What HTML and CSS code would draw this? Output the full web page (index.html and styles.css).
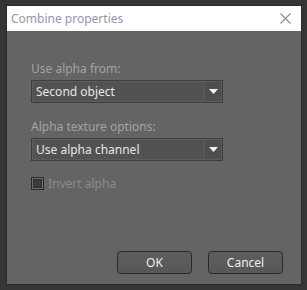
FILE: index.html
```html
<!DOCTYPE html>
<html lang="en">
<head>
  <meta charset="UTF-8" />
  <title>Combine properties</title>
  <link rel="stylesheet" href="styles.css">
</head>
<body>
  <div class="dialog">
    <div class="titlebar">
      <span class="title">Combine properties</span>
      <svg class="close" width="11" height="11" viewBox="0 0 11 11">
        <path d="M0.5 0.5 L10.5 10.5 M10.5 0.5 L0.5 10.5" stroke="#8a8a8a" stroke-width="1.1" fill="none"/>
      </svg>
    </div>
    <div class="content">
      <div class="field">
        <div class="label">Use alpha from:</div>
        <div class="select">
          <span class="value">Second object</span>
          <span class="arrow"><svg width="9" height="5" viewBox="0 0 9 5"><path d="M0 0 H9 L4.5 5 Z" fill="#f0f0f0"/></svg></span>
        </div>
      </div>
      <div class="field">
        <div class="label">Alpha texture options:</div>
        <div class="select">
          <span class="value">Use alpha channel</span>
          <span class="arrow"><svg width="9" height="5" viewBox="0 0 9 5"><path d="M0 0 H9 L4.5 5 Z" fill="#f0f0f0"/></svg></span>
        </div>
      </div>
      <label class="check">
        <span class="box"></span>
        <span>Invert alpha</span>
      </label>
      <div class="buttons">
        <button class="btn">OK</button>
        <button class="btn">Cancel</button>
      </div>
    </div>
  </div>
</body>
</html>
```

FILE: styles.css
```css
body {
  margin: 0;
  background-color: #353535;
  font-family: 'Segoe UI', 'Noto Sans', sans-serif;
  font-size: 12px;
}
.dialog {
  margin: 5px 0 0 6px;
  width: 294px;
  height: 278px;
  border: 1px solid #2b2b2b;
  background: #646464;
  display: flex;
  flex-direction: column;
}
.titlebar {
  height: 25px;
  background: #ffffff;
  display: flex;
  align-items: center;
  justify-content: space-between;
  padding: 0 10px 0 4px;
}
.title {
  color: #9595a8;
  font-size: 12px;
}
.content {
  flex: 1;
  padding: 30px 0 0 24px;
  display: flex;
  flex-direction: column;
}
.field {
  margin-bottom: 16px;
}
.label {
  color: #a3a3a3;
  line-height: 16px;
  margin-bottom: 3px;
}
.select {
  width: 188px;
  height: 19px;
  border: 1px solid #3e3e3e;
  background: #5c5c5c;
  display: flex;
  padding: 1px;
}
.value {
  flex: 1;
  background: #525252;
  color: #e6e6e6;
  line-height: 19px;
  padding-left: 3px;
}
.arrow {
  width: 16px;
  margin-left: 1px;
  background: #4e4e4e;
  display: flex;
  align-items: center;
  justify-content: center;
}
.check {
  display: flex;
  align-items: center;
  gap: 4px;
  color: #8c8c8c;
  margin-top: -2px;
}
.box {
  flex: none;
  width: 11px;
  height: 11px;
  border: 1px solid #2a2a2a;
  box-shadow: inset 0 0 0 1px #6e6e6e, inset 0 0 0 2px #2e2e2e;
  background: #3c3c3c;
}
.buttons {
  margin-top: auto;
  margin-bottom: 10px;
  display: flex;
  justify-content: flex-end;
  gap: 16px;
  padding-right: 18px;
}
.btn {
  width: 75px;
  height: 23px;
  border: 1px solid #2a2a2a;
  border-radius: 4px;
  background: linear-gradient(#5e5e5e, #575757);
  color: #eeeeee;
  font-family: inherit;
  font-size: 12px;
}
```
